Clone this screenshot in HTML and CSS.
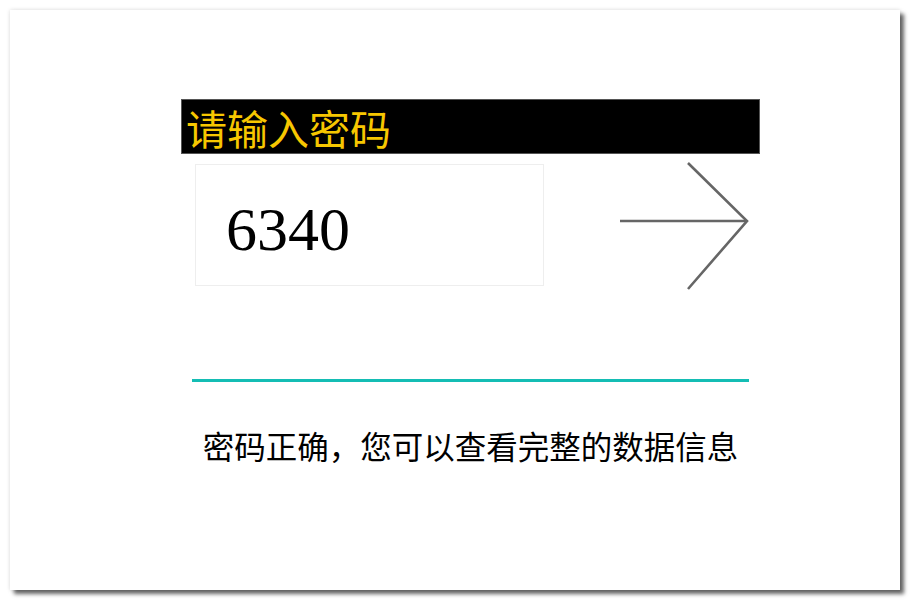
FILE: index.html
```html
<!DOCTYPE html>
<html lang="zh">
<head>
<meta charset="utf-8">
<title>密码</title>
<link rel="stylesheet" href="styles.css">
</head>
<body>
<div class="card">
  <div class="inner">
    <div class="title">请输入密码</div>
    <div class="row">
      <div class="input">6340</div>
      <svg class="arrow" width="132" height="134" viewBox="0 0 132 134">
        <line x1="2" y1="63" x2="129" y2="63" stroke="#666" stroke-width="2.6"/>
        <polyline points="70,5 129,63 70,131" fill="none" stroke="#666" stroke-width="2.6"/>
      </svg>
    </div>
    <div class="rule"></div>
    <div class="msg">密码正确，您可以查看完整的数据信息</div>
  </div>
</div>
</body>
</html>
```
FILE: styles.css
```css
html, body {
  margin: 0;
  background: #fff;
}
body {
  padding: 10px;
  font-family: "Noto Sans CJK SC", "Noto Sans", sans-serif;
}
.card {
  width: 890px;
  height: 580px;
  box-sizing: border-box;
  background: #fff;
  box-shadow: 4px 4px 4px rgba(0,0,0,0.6), 0 0 4px rgba(0,0,0,0.15);
  padding: 89px 0 0 171px;
}
.inner {
  display: flex;
  flex-direction: column;
  align-items: flex-start;
}
.title {
  width: 579px;
  height: 55px;
  box-sizing: border-box;
  background: #000;
  border: 1px solid #555;
  color: #f7c700;
  font-size: 41px;
  line-height: 54px;
  padding-left: 4px;
}
.row {
  display: flex;
  align-items: center;
  margin-left: 14px;
  margin-top: 4px;
  gap: 74px;
}
.input {
  width: 349px;
  height: 122px;
  box-sizing: border-box;
  border: 1px solid #eee;
  padding-left: 30px;
  font-family: "Liberation Serif", serif;
  font-variant-numeric: oldstyle-nums;
  font-size: 62px;
  line-height: 128px;
  color: #000;
}
.arrow {
  display: block;
}
.rule {
  margin-left: 11px;
  margin-top: 87px;
  width: 557px;
  height: 3px;
  background: #14bdb4;
}
.msg {
  margin-left: 11px;
  width: 557px;
  margin-top: 43px;
  text-align: center;
  font-size: 31.5px;
  line-height: 40px;
  color: #000;
}
```
